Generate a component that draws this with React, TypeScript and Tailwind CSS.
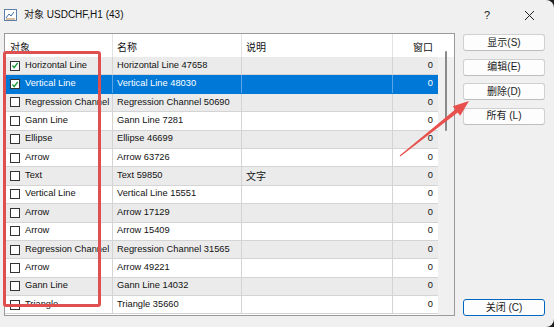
import React from "react";

type Row = [string, string, string, boolean];

const rows: Row[] = [
  ["Horizontal Line", "Horizontal Line 47658", "", true],
  ["Vertical Line", "Vertical Line 48030", "", true],
  ["Regression Channel", "Regression Channel 50690", "", false],
  ["Gann Line", "Gann Line 7281", "", false],
  ["Ellipse", "Ellipse 46699", "", false],
  ["Arrow", "Arrow 63726", "", false],
  ["Text", "Text 59850", "文字", false],
  ["Vertical Line", "Vertical Line 15551", "", false],
  ["Arrow", "Arrow 17129", "", false],
  ["Arrow", "Arrow 15409", "", false],
  ["Regression Channel", "Regression Channel 31565", "", false],
  ["Arrow", "Arrow 49221", "", false],
  ["Gann Line", "Gann Line 14032", "", false],
  ["Triangle", "Triangle 35660", "", false],
];

const font = { fontFamily: '"Liberation Sans", "Noto Sans CJK SC", sans-serif' };

const CheckBox = ({ checked }: { checked: boolean }) => (
  <span className="w-[10px] h-[10px] border border-[#333] bg-white flex items-center justify-center shrink-0">
    {checked && (
      <svg width="9" height="9" viewBox="0 0 9 9">
        <path d="M1.5 4.5 L3.6 6.8 L7.6 1.6" fill="none" stroke="#1f9d3a" strokeWidth="1.6" />
      </svg>
    )}
  </span>
);

const Btn = ({ label, primary }: { label: string; primary?: boolean }) => (
  <button
    className={
      "w-[82px] h-[17px] rounded-[3px] bg-[#fdfdfd] text-[10px] leading-none text-[#1b1b1b] flex items-center justify-center border " +
      (primary ? "border-[#0067c0]" : "border-[#d0d0d0] border-b-[#bdbdbd]")
    }
  >
    {label}
  </button>
);

export default function App() {
  return (
    <div className="w-[554px] h-[327px] bg-[#1c1c1c] overflow-hidden" style={font}>
      <div className="relative w-[554px] h-[327px] bg-[#f0f0f0] rounded-tr-[8px] rounded-br-[8px] flex flex-col">
        {/* title bar */}
        <div className="h-[33px] flex items-start pt-[8px] pl-[4px] pr-[19px]">
          <svg width="13" height="12" viewBox="0 0 13 12" className="mt-[1px]">
            <rect x="0.5" y="0.5" width="12" height="11" fill="#fff" stroke="#5b7fa8" />
            <path d="M2 9 L5 5 L7 7 L10 3" fill="none" stroke="#3a6fb0" strokeWidth="1" />
            <path d="M2 10 L11 10" stroke="#b08040" strokeWidth="1" />
          </svg>
          <span className="ml-[7px] text-[10px] text-[#111] leading-[14px]">对象 USDCHF,H1 (43)</span>
          <span className="ml-auto text-[11px] text-[#222] leading-[14px] mr-[34px]">?</span>
          <svg width="11" height="11" viewBox="0 0 11 11" className="mt-[2px]">
            <path d="M1 1 L10 10 M10 1 L1 10" stroke="#222" strokeWidth="1" />
          </svg>
        </div>

        {/* body */}
        <div className="flex pl-[4px]">
          <div className="w-[451px] h-[283px] border border-[#9a9a9a] bg-white overflow-hidden flex flex-col">
            <div className="h-[23px] shrink-0 flex text-[10px] text-[#111] bg-white">
              <div className="w-[108px] border-r border-[#e3e3e3] pl-[5px] pt-[6px]">对象</div>
              <div className="w-[129px] border-r border-[#e3e3e3] pl-[4px] pt-[6px]">名称</div>
              <div className="w-[151px] border-r border-[#e3e3e3] pl-[4px] pt-[6px]">说明</div>
              <div className="w-[45px] pr-[5px] pt-[6px] text-right">窗口</div>
              <div className="flex-1" />
            </div>
            <div className="flex flex-1 min-h-0">
              <div className="w-[433px] flex flex-col">
                {rows.map(([obj, name, desc, checked], i) => {
                  const sel = i === 1;
                  const bg = sel ? "bg-[#0078d7] text-white" : i % 2 === 0 ? "bg-[#ebebeb] text-[#111]" : "bg-white text-[#111]";
                  const sep = sel ? "border-[#5aa3e6]" : "border-[#d4d4d4]";
                  return (
                    <div key={i} className={"h-[18.4px] shrink-0 flex text-[9.3px] border-b box-border " + bg + " " + (sel ? "border-[#0078d7]" : "border-[#d4d4d4]")}>
                      <div className={"w-[108px] border-r flex items-center pl-[5px] gap-[5px] whitespace-nowrap overflow-hidden " + sep}>
                        <CheckBox checked={checked} />
                        <span>{obj}</span>
                      </div>
                      <div className={"w-[129px] border-r flex items-center pl-[4px] whitespace-nowrap overflow-hidden " + sep}>{name}</div>
                      <div className={"w-[151px] border-r flex items-center pl-[4px] text-[10px] " + sep}>{desc}</div>
                      <div className="w-[45px] flex items-center justify-end pr-[5px]">0</div>
                    </div>
                  );
                })}
              </div>
              <div className="flex-1 bg-[#f0f0f0] flex justify-center">
                <div className="w-[2px] h-[80px] mt-[-6px] bg-[#8a8a8a] rounded-full" />
              </div>
            </div>
          </div>

          <div className="ml-[8px] h-[283px] flex flex-col justify-between pt-[1px]">
            <div className="flex flex-col gap-[7.5px]">
              <Btn label="显示(S)" />
              <Btn label="编辑(E)" />
              <Btn label="删除(D)" />
              <Btn label="所有 (L)" />
            </div>
            <Btn label="关闭 (C)" primary />
          </div>
        </div>

        {/* annotations */}
        <div className="absolute left-[3px] top-[51px] w-[98px] h-[256px] border-[3px] border-[#e04f4f] rounded-[3px] pointer-events-none" />
        <svg className="absolute left-0 top-0 pointer-events-none" width="554" height="327">
          <polygon
            points="399.7,155.6 455.25,109.43 452.8,106.3 469,101 460.2,115.7 457.75,112.57 400.3,156.4"
            fill="#e8504d"
          />
        </svg>
      </div>
    </div>
  );
}
